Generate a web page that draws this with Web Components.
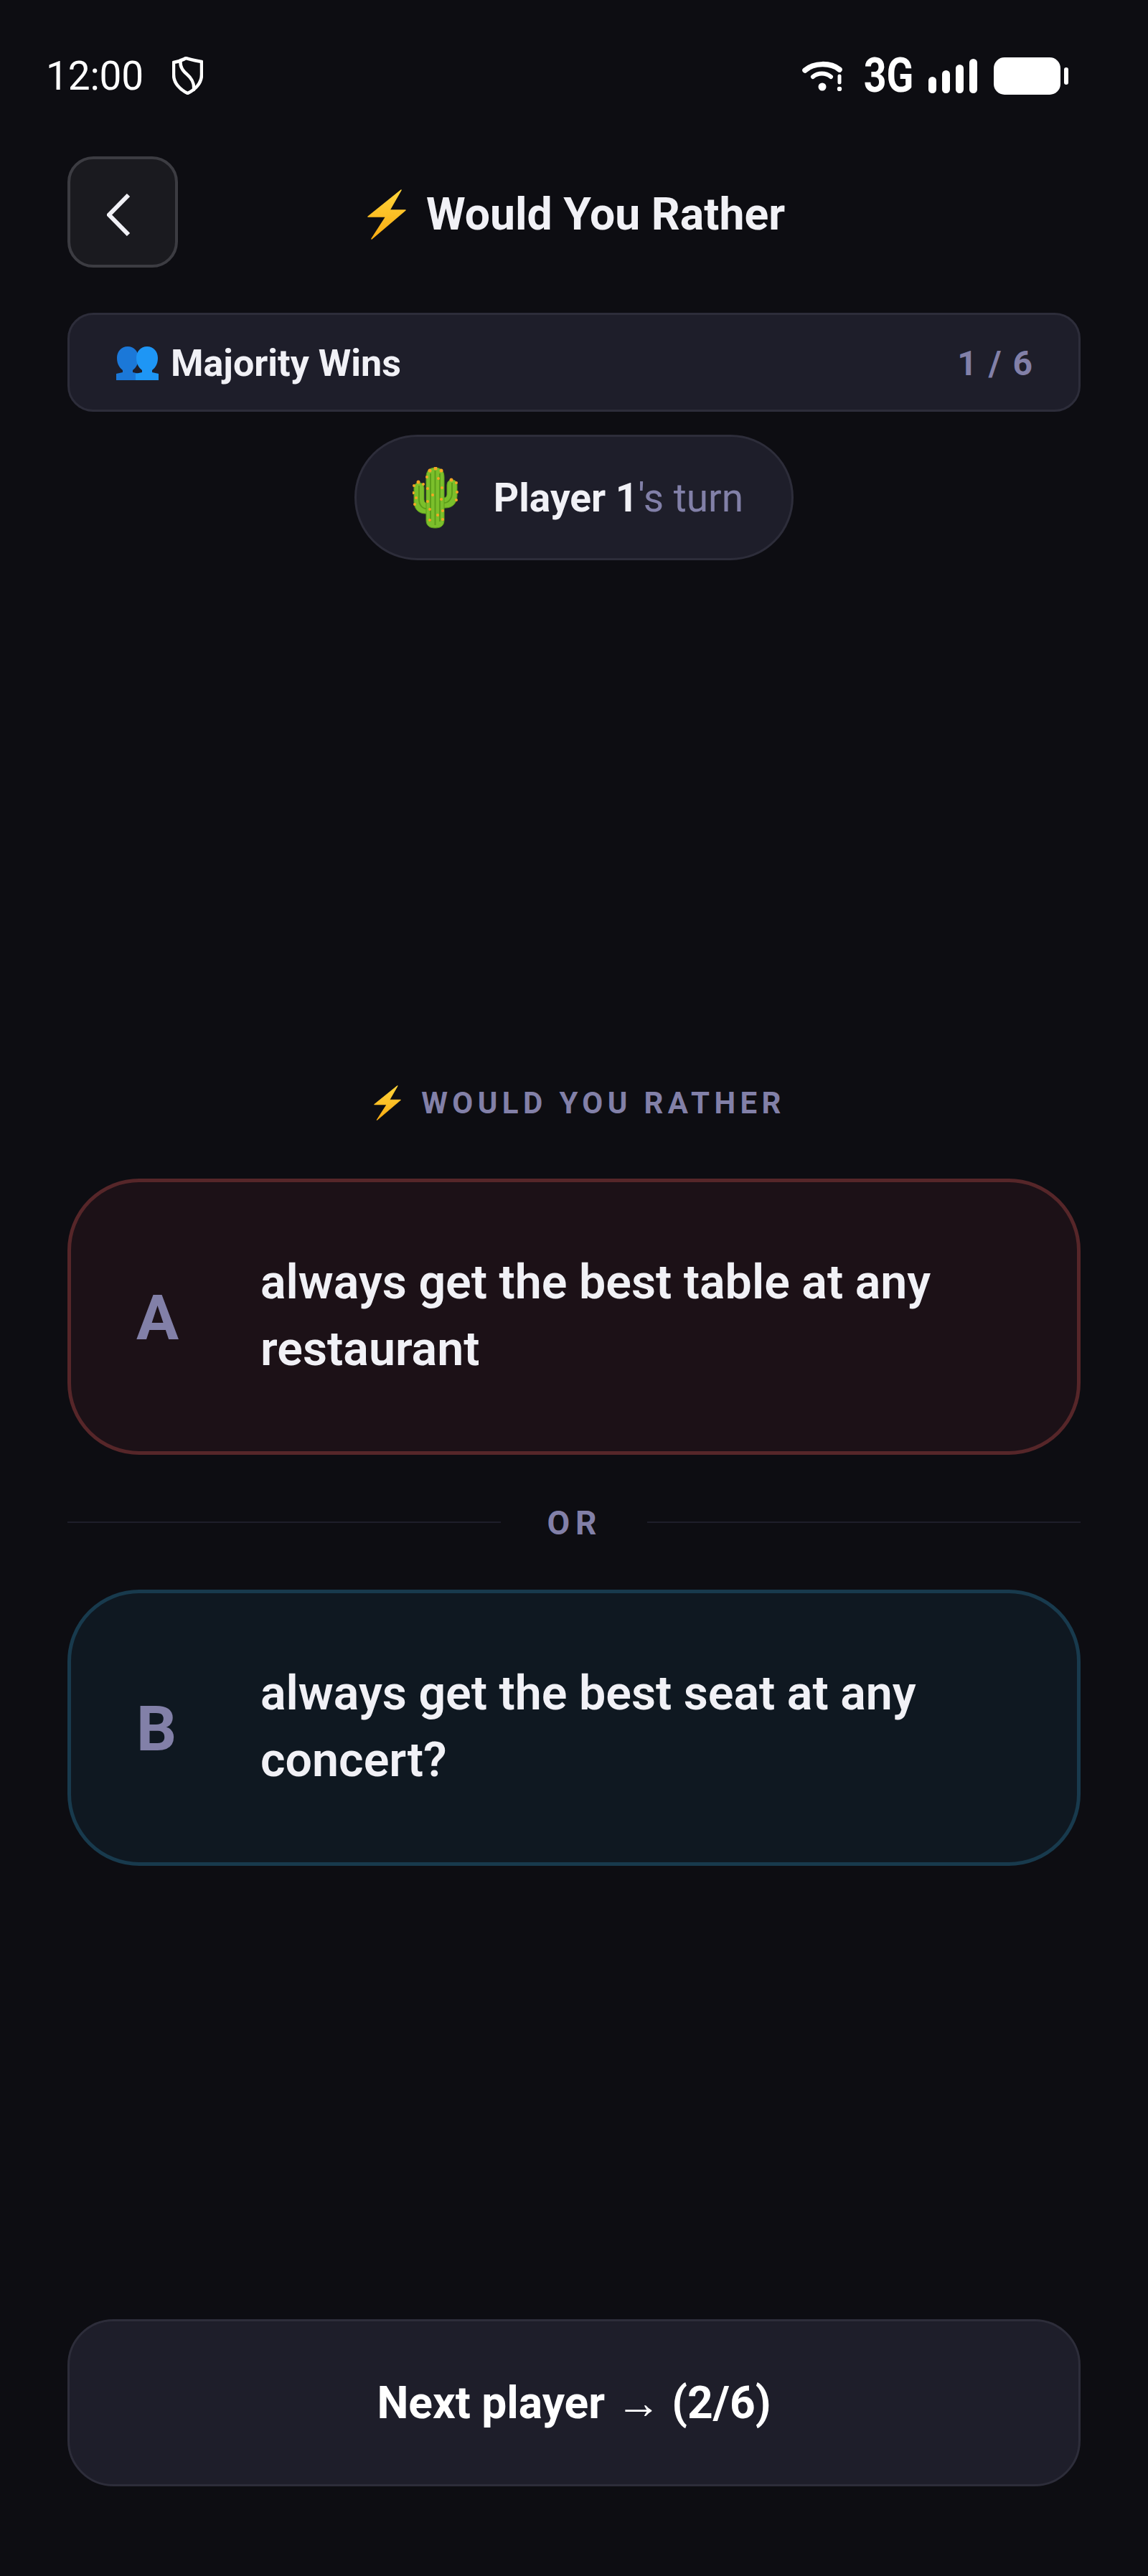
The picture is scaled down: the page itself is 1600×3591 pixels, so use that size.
<!DOCTYPE html>
<html lang="en">
<head>
<meta charset="utf-8">
<title>Would You Rather</title>
<style>
  html, body { margin: 0; background: #0d0d12; }
  body { font-family: Roboto, "Liberation Sans", sans-serif; }
</style>
</head>
<body>
<game-screen>
  <status-bar slot="status"></status-bar>
  <top-bar slot="top" heading="Would You Rather"></top-bar>
  <mode-bar slot="top" label="Majority Wins" count="1 / 6"></mode-bar>
  <turn-pill slot="top"><b>Player 1</b>'s turn</turn-pill>
  <rather-label slot="main">WOULD YOU RATHER</rather-label>
  <choice-card slot="main" letter="A" tone="red">always get the best table at any restaurant</choice-card>
  <or-divider slot="main"></or-divider>
  <choice-card slot="main" letter="B" tone="blue">always get the best seat at any concert?</choice-card>
  <next-button slot="bottom">Next player → (2/6)</next-button>
</game-screen>

<script>
const BOLT = `<svg viewBox="0 0 54 70" width="100%" height="100%" aria-hidden="true">
  <defs><linearGradient id="b" x1="0" y1="0" x2="0" y2="1"><stop offset="0" stop-color="#ffd43a"/><stop offset="1" stop-color="#f9ac12"/></linearGradient></defs>
  <path d="M47 1 L1 38 L26 38 L6 69 L53 29 L31 29 Z" fill="url(#b)" stroke="url(#b)" stroke-width="1.5" stroke-linejoin="round"/>
</svg>`;

class GameScreen extends HTMLElement {
  constructor() {
    super();
    this.attachShadow({ mode: "open" }).innerHTML = `
      <style>
        :host { display: flex; flex-direction: column; width: 1600px; height: 3591px; background: #0d0d12; color: #f1f1f6; box-sizing: border-box; }
        .top { display: flex; flex-direction: column; padding: 0 94px; }
        .main { flex: 1; display: flex; flex-direction: column; justify-content: center; padding: 99px 94px 0; }
        .bottom { padding: 0 94px 125px; }
      </style>
      <slot name="status"></slot>
      <div class="top"><slot name="top"></slot></div>
      <div class="main"><slot name="main"></slot></div>
      <div class="bottom"><slot name="bottom"></slot></div>`;
  }
}

class StatusBar extends HTMLElement {
  constructor() {
    super();
    this.attachShadow({ mode: "open" }).innerHTML = `
      <style>
        :host { display: flex; align-items: center; justify-content: space-between; height: 53px; margin-top: 79px; padding: 0 111px 0 64px; color: #fff; }
        .left, .right { display: flex; align-items: center; }
        .time { font-size: 55px; font-weight: 400; letter-spacing: -.2px; }
        .shield { width: 43px; height: 53px; margin-left: 40px; }
        .wifi { width: 56px; height: 42px; }
        .net { display: flex; justify-content: center; width: 69px; margin-left: 30px; font-size: 66px; font-weight: 700; line-height: 53px; transform: scaleX(.84); }
        .bars { width: 68px; height: 48px; margin-left: 21px; }
        .batt { width: 104px; height: 52px; margin-left: 23px; }
      </style>
      <div class="left">
        <span class="time">12:00</span>
        <svg class="shield" viewBox="0 0 43 53" fill="none" stroke="#fff" stroke-width="4.500" stroke-linejoin="round">
          <path d="M19 2 C26 4 33 6 41 7 V25 C41 37 32 46 21.500 51 C11 46 2 37 2 25 V8 C8 7 14 5 19 2 Z"/>
          <path d="M12 5 C10 13 14 19 20 24 C27 30 31 36 30 46" stroke-linecap="round"/>
        </svg>
      </div>
      <div class="right">
        <svg class="wifi" viewBox="0 0 56 42" fill="none" stroke="#fff" stroke-linecap="round">
          <path d="M4 13 C16 2 40 2 52 12" stroke-width="7.500"/>
          <path d="M15 22 C22 16 33 16 40 22" stroke-width="6"/>
          <circle cx="28" cy="36" r="5.500" fill="#fff" stroke="none"/>
          <path d="M52 21 V30" stroke-width="5"/>
          <circle cx="52" cy="39" r="3.200" fill="#fff" stroke="none"/>
        </svg>
        <span class="net">3G</span>
        <svg class="bars" viewBox="0 0 68 48" fill="#fff">
          <rect x="0" y="25" width="11" height="23" rx="5.500"/>
          <rect x="19" y="16" width="11" height="32" rx="5.500"/>
          <rect x="38" y="8" width="11" height="40" rx="5.500"/>
          <rect x="57" y="0" width="11" height="48" rx="5.500"/>
        </svg>
        <svg class="batt" viewBox="0 0 104 52" fill="#fff">
          <rect x="0" y="0" width="93" height="52" rx="15"/>
          <rect x="98" y="14" width="6" height="24" rx="3"/>
        </svg>
      </div>`;
  }
}

class TopBar extends HTMLElement {
  constructor() {
    super();
    this.attachShadow({ mode: "open" }).innerHTML = `
      <style>
        :host { display: flex; align-items: center; margin-top: 86px; }
        .back { width: 154px; height: 155px; box-sizing: border-box; border: 4.500px solid #3c3c42; border-radius: 36px; background: #1a1a1f; display: flex; align-items: center; justify-content: center; flex: none; }
        .back svg { width: 33px; height: 59px; margin: 8px 12px 0 0; }
        .title { flex: 1; display: flex; align-items: center; justify-content: center; gap: 28px; padding-top: 6px; font-size: 62.500px; font-weight: 700; margin-right: 148px; color: #f1f1f6; }
        .bolt { width: 54px; height: 70px; }
      </style>
      <div class="back"><svg viewBox="0 0 33 59" fill="none" stroke="#f1f1f6" stroke-width="6"><path d="M30 2 L3 29.500 L30 57" stroke-linejoin="miter"/></svg></div>
      <div class="title"><span class="bolt">${BOLT}</span><span>${this.getAttribute("heading")}</span></div>`;
  }
}

class ModeBar extends HTMLElement {
  constructor() {
    super();
    const bust = "M16 0 C25 0 31 7 31 16 C31 25 27 30 23 33 V36 L32 38 V47 H0 V38 L9 36 V33 C5 30 1 25 1 16 C1 7 7 0 16 0 Z";
    this.attachShadow({ mode: "open" }).innerHTML = `
      <style>
        :host { display: flex; align-items: center; justify-content: space-between; height: 138px; margin-top: 63px; padding: 2px 62px 0 65px; box-sizing: border-box; background: #1e1e2a; border: 3px solid #2d2d3a; border-radius: 36px; }
        .label { display: flex; align-items: center; font-size: 52px; font-weight: 700; color: #f1f1f6; }
        .people { width: 59px; height: 47px; margin-right: 17px; }
        .count { font-size: 48px; font-weight: 700; color: #8280a8; letter-spacing: 2px; }
      </style>
      <div class="label">
        <svg class="people" viewBox="0 0 59 47">
          <path d="${bust}" fill="#1b78d8"/>
          <path d="${bust}" fill="#1e96f5" transform="translate(27 0)"/>
        </svg>
        <span>${this.getAttribute("label")}</span>
      </div>
      <span class="count">${this.getAttribute("count")}</span>`;
  }
}

class TurnPill extends HTMLElement {
  constructor() {
    super();
    this.attachShadow({ mode: "open" }).innerHTML = `
      <style>
        :host { display: flex; align-self: center; align-items: center; height: 175px; margin-top: 32px; padding: 0 67px 0 78px; box-sizing: border-box; background: #1e1e2a; border: 3px solid #2d2d3a; border-radius: 88px; font-size: 55px; font-weight: 400; color: #8280a8; }
        svg { width: 64px; height: 86px; margin-right: 49px; }
        ::slotted(b) { font-weight: 700; color: #f1f1f6; }
      </style>
      <svg viewBox="0 0 64 86">
        <g fill="#7bbf2b" stroke="#5c9e1a" stroke-width="1">
          <path d="M2 30 C2 24 5 22 9 22 C13 22 16 24 16 30 V44 C16 49 18 51 22 51 V65 H18 C8 65 2 58 2 48 Z"/>
          <path d="M62 26 C62 20 59 18 55 18 C51 18 48 20 48 26 V37 C48 42 46 43 42 43 V57 H46 C56 57 62 50 62 40 Z"/>
          <path d="M19 14 C19 5 24 1 31.500 1 C39 1 44 5 44 14 V74 C44 82 39 85 31.500 85 C24 85 19 82 19 74 Z"/>
        </g>
        <path d="M31.500 5 V81 M25 9 V76 M38 9 V76 M9 26 V46 C9 52 13 58 19 58 M55 22 V36 C55 44 50 50 44 50" stroke="#5c9e1a" stroke-width="2" fill="none"/>
        <g fill="#f5a623"><circle cx="32" cy="2" r="2.500"/><circle cx="24" cy="5" r="2.500"/><circle cx="40" cy="5" r="2.500"/><circle cx="20" cy="14" r="2"/><circle cx="36" cy="16" r="2"/><circle cx="8" cy="21" r="2.500"/><circle cx="2" cy="26" r="2"/><circle cx="15" cy="24" r="2"/><circle cx="54" cy="18" r="2.500"/><circle cx="61" cy="22" r="2"/><circle cx="1" cy="36" r="2"/><circle cx="5" cy="43" r="2"/><circle cx="62" cy="35" r="2"/><circle cx="61" cy="46" r="2"/><circle cx="21" cy="30" r="2"/><circle cx="41" cy="29" r="2"/><circle cx="28" cy="39" r="2"/><circle cx="40" cy="45" r="2"/><circle cx="21" cy="48" r="2"/><circle cx="3" cy="52" r="2"/><circle cx="24" cy="59" r="2"/><circle cx="42" cy="61" r="2"/><circle cx="35" cy="67" r="2"/><circle cx="24" cy="74" r="2"/><circle cx="42" cy="73" r="2"/></g>
      </svg>
      <span><slot></slot></span>`;
  }
}

class RatherLabel extends HTMLElement {
  constructor() {
    super();
    this.attachShadow({ mode: "open" }).innerHTML = `
      <style>
        :host { display: flex; align-items: center; justify-content: center; gap: 28px; margin-bottom: 81px; padding-left: 16px; font-size: 42px; font-weight: 700; letter-spacing: 6.400px; color: #8280a8; }
        .bolt { width: 38px; height: 49px; }
      </style>
      <span class="bolt">${BOLT}</span><span><slot></slot></span>`;
  }
}

class ChoiceCard extends HTMLElement {
  constructor() {
    super();
    const blue = this.getAttribute("tone") === "blue";
    this.attachShadow({ mode: "open" }).innerHTML = `
      <style>
        :host { display: flex; align-items: center; height: 385px; padding: 0 94px 0 91px; box-sizing: border-box; border: 5.500px solid ${blue ? "#183a4d" : "#562629"}; border-radius: 100px; background: ${blue ? "#0f1821" : "#1c1117"}; }
        .letter { width: 173px; flex: none; padding-top: 4px; font-size: 88px; font-weight: 700; color: #8280a8; line-height: 1; }
        .text { font-size: 66.300px; font-weight: 600; line-height: 93px; color: #f1f1f6; padding-bottom: 2px; }
      </style>
      <span class="letter">${this.getAttribute("letter")}</span>
      <span class="text"><slot></slot></span>`;
  }
}

class OrDivider extends HTMLElement {
  constructor() {
    super();
    this.attachShadow({ mode: "open" }).innerHTML = `
      <style>
        :host { display: flex; align-items: center; height: 188px; gap: 62px; font-size: 46px; font-weight: 700; letter-spacing: 8px; color: #8280a8; }
        i { flex: 1; height: 2px; background: #1e1e2a; }
        span { padding: 3px 0 0 2px; }
      </style>
      <i></i><span>OR</span><i></i>`;
  }
}

class NextButton extends HTMLElement {
  constructor() {
    super();
    this.attachShadow({ mode: "open" }).innerHTML = `
      <style>
        :host { display: flex; align-items: center; justify-content: center; height: 233px; box-sizing: border-box; background: #1e1e2a; border: 3px solid #2d2d3a; border-radius: 64px; font-size: 62.300px; font-weight: 700; color: #fff; }
      </style>
      <slot></slot>`;
  }
}

customElements.define("game-screen", GameScreen);
customElements.define("status-bar", StatusBar);
customElements.define("top-bar", TopBar);
customElements.define("mode-bar", ModeBar);
customElements.define("turn-pill", TurnPill);
customElements.define("rather-label", RatherLabel);
customElements.define("choice-card", ChoiceCard);
customElements.define("or-divider", OrDivider);
customElements.define("next-button", NextButton);
</script>
</body>
</html>
